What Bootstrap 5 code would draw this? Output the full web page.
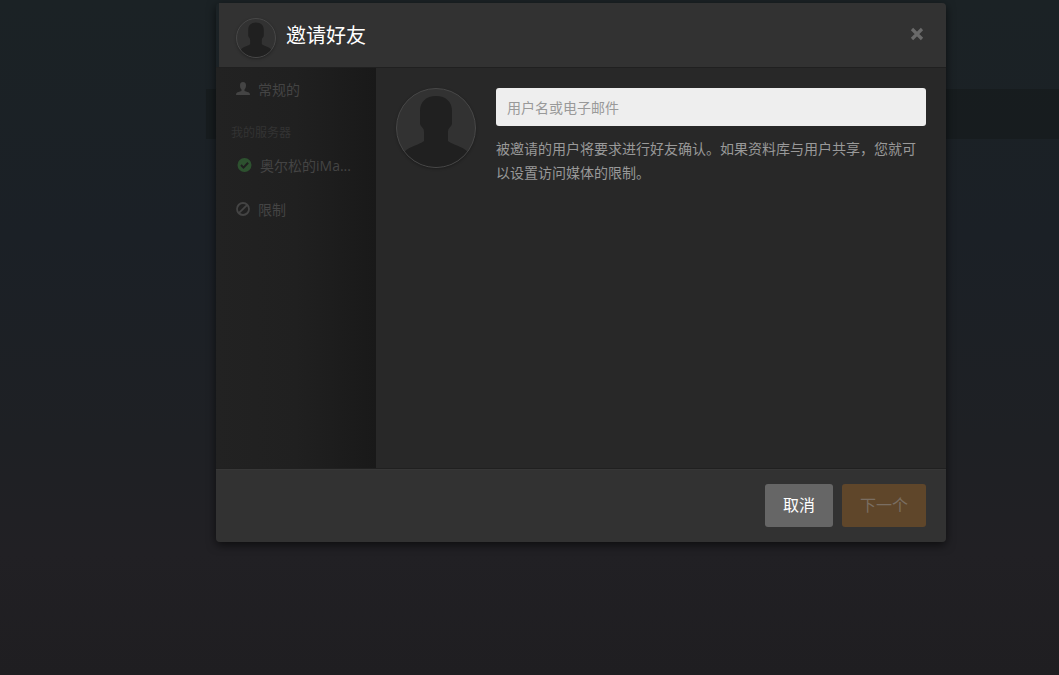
<!DOCTYPE html>
<html lang="zh-CN">
<head>
<meta charset="utf-8">
<meta name="viewport" content="width=device-width, initial-scale=1">
<title>邀请好友</title>
<link href="https://cdn.jsdelivr.net/npm/bootstrap@5.3.0/dist/css/bootstrap.min.css" rel="stylesheet">
<style>
body{font-family:"Open Sans","Noto Sans CJK SC",sans-serif;font-size:14px;color:#999;background:linear-gradient(180deg,#1b2225 0%,#1b2026 35%,#1e2024 65%,#212024 82%,#1f1e21 100%) no-repeat #1f1e21;min-height:100vh}
.page-strip{height:50px;margin:89px 0 0 206px;background:rgba(20,24,23,.5)}
.invite-layer{position:absolute;inset:0;padding:3px 0 0 103px}
.invite-dialog{width:730px;max-width:100%;border-radius:4px;box-shadow:0 3px 10px rgba(0,0,0,.6)}
.invite-header{height:64px;margin-left:3px;padding:2px 20px 0 17px;gap:10px;background:#323232;border-radius:0 4px 0 0}
.invite-header h1{font-size:20px;line-height:24px;color:#fff}
.invite-close{line-height:0;color:#696969}
.invite-main{min-height:402px;background:#282828;border-top:1px solid #202020;border-bottom:1px solid #202020}
.invite-side{width:160px;padding:9px 0 0 15px;background:linear-gradient(90deg,#222 0%,#202020 50%,#191919 100%)}
.invite-side a{color:#444;height:24px;margin-left:5px;text-decoration:none}
.side-label{font-size:12px;line-height:16px;color:#333;margin:24px 0 12px}
.side-limit{margin-top:20px}
.avatar-ring{border-radius:50%;border:1px solid #484848;background:#323232;overflow:hidden;box-shadow:0 1px 3px rgba(0,0,0,.3)}
.avatar-sm{width:40px;height:40px}
.avatar-lg{width:80px;height:80px}
.invite-form{padding:20px;gap:20px}
.invite-input,.invite-input:focus{height:38px;background:#eee;border:0;border-radius:3px;font-size:14px;line-height:24px;color:#333;padding:0 11px}
.invite-input::placeholder{color:#999;opacity:1}
.invite-help{line-height:24px;color:#999;margin:11px 0 0}
.invite-footer{height:73px;background:#323232;border-top:1px solid #373737;border-radius:0 0 4px 4px;padding:0 20px 2px;gap:9px}
.invite-btn,.invite-btn:disabled{height:43px;font-size:16px;border:0;border-radius:3px;padding:0 18px;opacity:1}
.btn-cancel,.btn-cancel:hover{background:#666;color:#fff}
.btn-next:disabled{background:#5f462a;color:#7a6e62}
</style>
<script src="https://cdn.jsdelivr.net/npm/bootstrap@5.3.0/dist/js/bootstrap.bundle.min.js"></script>
</head>
<body>
<svg class="d-none" aria-hidden="true">
  <symbol id="person" viewBox="1 1 78 78"><path fill="#202020" d="M40 8c-10 0-16 6-16 15v12c0 4 4 4 4 9v9C23 57 14 58 8 64L0 72v8h80v-8l-8-8c-6-6-15-7-20-11v-9c0-5 4-5 4-9V23C56 14 50 8 40 8z"/></symbol>
</svg>
<div class="overflow-hidden"><div class="page-strip"></div></div>
<div class="invite-layer d-flex justify-content-center align-items-start">
  <div class="invite-dialog" role="dialog" aria-labelledby="inviteTitle">
    <header class="invite-header d-flex align-items-center">
      <div class="avatar-ring avatar-sm mt-1"><svg class="d-block" width="38" height="38"><use href="#person"/></svg></div>
      <h1 id="inviteTitle" class="mb-0 fw-normal">邀请好友</h1>
      <button type="button" class="invite-close btn p-0 border-0 ms-auto me-0 mb-1" aria-label="关闭"><svg width="18" height="18" viewBox="0 0 18 18" fill="none" stroke="#696969" stroke-width="3.2"><path d="M4 4l10 10M14 4L4 14"/></svg></button>
    </header>
    <div class="invite-main d-flex">
      <nav class="invite-side d-flex flex-column flex-shrink-0">
        <a href="#" class="d-flex align-items-center gap-2"><svg width="14" height="14" viewBox="0 0 14 14" fill="#444"><path d="M7 0C4.800 0 4 1.500 4 3.500c0 2 .7 3.200 1.500 4V9L1 10.500Q0 11 0 13h14q0-2-1-2.500L8.500 9V7.500C9.300 6.700 10 5.500 10 3.500 10 1.500 9.200 0 7 0z"/></svg>常规的</a>
        <div class="side-label">我的服务器</div>
        <a href="#" class="d-flex align-items-center gap-2"><svg width="16" height="16" viewBox="0 0 16 16"><circle cx="8.500" cy="8" r="7" fill="#2d512f"/><path d="M5 8l2.500 2.600L12.100 5.800" fill="none" stroke="#1f1f1f" stroke-width="2"/></svg>奥尔松的iMa...</a>
        <a href="#" class="side-limit d-flex align-items-center gap-2"><svg width="14" height="14" viewBox="0 0 14 14" fill="none" stroke="#444" stroke-width="1.800"><circle cx="7" cy="7" r="6"/><path d="M11.200 2.800l-8.400 8.400"/></svg>限制</a>
      </nav>
      <form class="invite-form d-flex flex-grow-1 align-items-start">
        <div class="avatar-ring avatar-lg flex-shrink-0"><svg class="d-block" width="78" height="78"><use href="#person"/></svg></div>
        <div class="flex-grow-1">
          <input class="invite-input form-control" type="text" aria-label="用户名或电子邮件" placeholder="用户名或电子邮件">
          <p class="invite-help">被邀请的用户将要求进行好友确认。如果资料库与用户共享，您就可以设置访问媒体的限制。</p>
        </div>
      </form>
    </div>
    <footer class="invite-footer d-flex align-items-center justify-content-end">
      <button type="button" class="invite-btn btn btn-cancel">取消</button>
      <button type="button" class="invite-btn btn btn-next" disabled>下一个</button>
    </footer>
  </div>
</div>
</body>
</html>
